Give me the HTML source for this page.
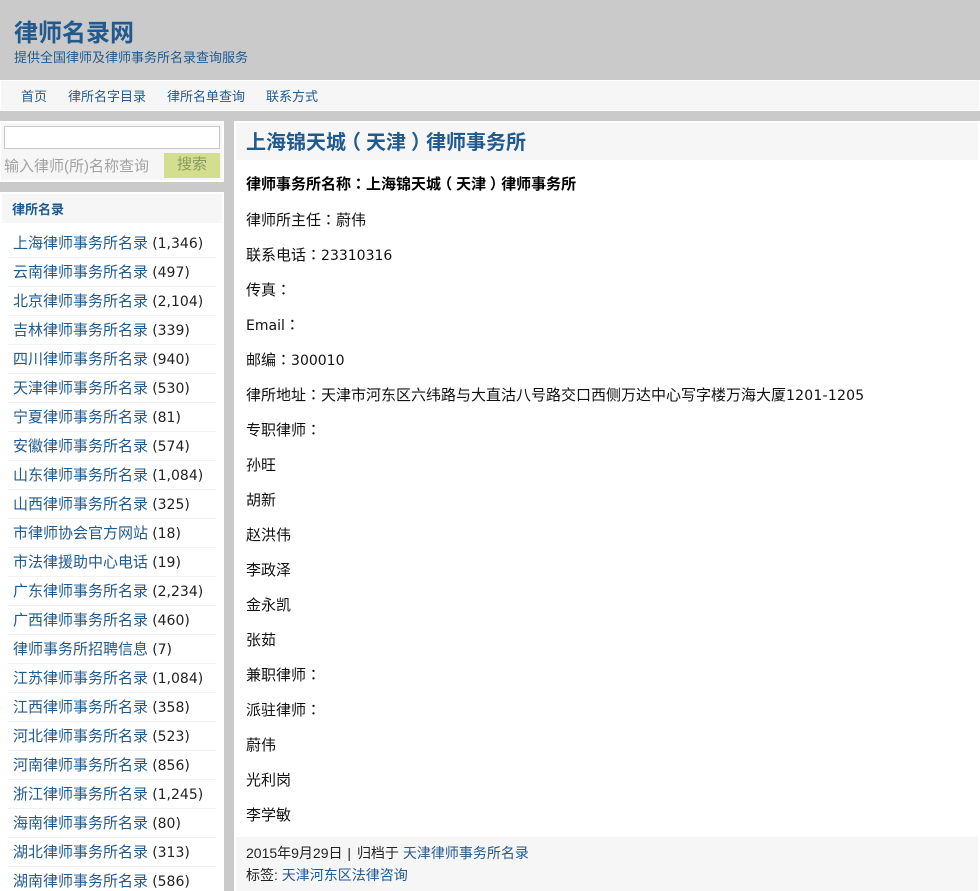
<!DOCTYPE html>
<html><head><meta charset="utf-8"><title>上海锦天城（天津）律师事务所</title>
<style>
html,body{margin:0;padding:0;background:#cacaca;height:891px;overflow:hidden}
body{width:980px;position:relative;font-family:"Liberation Sans","Noto Sans CJK SC",sans-serif;font-size:15px;color:#111}
.a{position:absolute;white-space:nowrap}
a{color:#215a8f;text-decoration:none}
i{font-style:normal;font-family:"Noto Sans CJK TC",sans-serif;line-height:0}
i.l{position:relative;left:-.25em}
i.r{position:relative;left:.25em}
.num{font-family:"DejaVu Sans","Noto Sans CJK SC",sans-serif;font-size:14px;line-height:0}
#nav{left:0;top:80px;width:980px;height:31px;background:#f6f6f6;border:1px solid #fff;box-sizing:border-box}
#nav a{position:absolute;top:7px;font-size:13px;line-height:17px}
#side1{left:0;top:121px;width:224px;height:61px;background:#f6f6f6;border:2px solid #fff;border-left-width:1px;box-sizing:border-box}
#side2{left:0;top:192px;width:224px;height:699px;background:#fff}
#main{left:234px;top:121px;width:746px;height:770px;background:#fff}
.item{position:absolute;left:8px;width:208px;height:28px;border-bottom:1px solid #f2f2f2;line-height:30px;white-space:nowrap;color:#222;text-indent:5px}
.item a{font-size:15px}
.p{position:absolute;left:246px;white-space:nowrap;line-height:20px;font-size:15px;color:#111}
</style></head><body>
<div class="a" style="left:14px;top:17px;font-size:24px;font-weight:bold;color:#215a8f;line-height:34px">律师名录网</div>
<div class="a" style="left:14px;top:50px;font-size:13px;color:#215a8f;line-height:16px">提供全国律师及律师事务所名录查询服务</div>
<div class="a" id="nav">
<a style="left:20px">首页</a><a style="left:67px">律所名字目录</a><a style="left:166px">律所名单查询</a><a style="left:265px">联系方式</a>
</div>
<div class="a" id="side1"></div>
<div class="a" style="left:4px;top:126px;width:216px;height:23px;background:#fff;border:1px solid #c8c8c8;box-sizing:border-box"></div>
<div class="a" style="left:4px;top:157px;font-size:15px;line-height:20px;color:#a3a3a3">输入律师(所)名称查询</div>
<div class="a" style="left:164px;top:153px;width:56px;height:25px;background:#d3df8f;color:#8b9a62;font-size:15px;line-height:24px;text-align:center">搜索</div>
<div class="a" id="side2">
<div style="position:absolute;left:2px;top:2px;width:220px;height:29px;background:#f6f6f6"></div>
<div class="a" style="left:12px;top:9px;font-size:13px;font-weight:bold;color:#215a8f;line-height:18px">律所名录</div>
<div class="item" style="top:37px"><a>上海律师事务所名录</a> <span class="num">(1,346)</span></div>
<div class="item" style="top:66px"><a>云南律师事务所名录</a> <span class="num">(497)</span></div>
<div class="item" style="top:95px"><a>北京律师事务所名录</a> <span class="num">(2,104)</span></div>
<div class="item" style="top:124px"><a>吉林律师事务所名录</a> <span class="num">(339)</span></div>
<div class="item" style="top:153px"><a>四川律师事务所名录</a> <span class="num">(940)</span></div>
<div class="item" style="top:182px"><a>天津律师事务所名录</a> <span class="num">(530)</span></div>
<div class="item" style="top:211px"><a>宁夏律师事务所名录</a> <span class="num">(81)</span></div>
<div class="item" style="top:240px"><a>安徽律师事务所名录</a> <span class="num">(574)</span></div>
<div class="item" style="top:269px"><a>山东律师事务所名录</a> <span class="num">(1,084)</span></div>
<div class="item" style="top:298px"><a>山西律师事务所名录</a> <span class="num">(325)</span></div>
<div class="item" style="top:327px"><a>市律师协会官方网站</a> <span class="num">(18)</span></div>
<div class="item" style="top:356px"><a>市法律援助中心电话</a> <span class="num">(19)</span></div>
<div class="item" style="top:385px"><a>广东律师事务所名录</a> <span class="num">(2,234)</span></div>
<div class="item" style="top:414px"><a>广西律师事务所名录</a> <span class="num">(460)</span></div>
<div class="item" style="top:443px"><a>律师事务所招聘信息</a> <span class="num">(7)</span></div>
<div class="item" style="top:472px"><a>江苏律师事务所名录</a> <span class="num">(1,084)</span></div>
<div class="item" style="top:501px"><a>江西律师事务所名录</a> <span class="num">(358)</span></div>
<div class="item" style="top:530px"><a>河北律师事务所名录</a> <span class="num">(523)</span></div>
<div class="item" style="top:559px"><a>河南律师事务所名录</a> <span class="num">(856)</span></div>
<div class="item" style="top:588px"><a>浙江律师事务所名录</a> <span class="num">(1,245)</span></div>
<div class="item" style="top:617px"><a>海南律师事务所名录</a> <span class="num">(80)</span></div>
<div class="item" style="top:646px"><a>湖北律师事务所名录</a> <span class="num">(313)</span></div>
<div class="item" style="top:675px"><a>湖南律师事务所名录</a> <span class="num">(586)</span></div>
</div>
<div class="a" id="main"></div>
<div class="a" style="left:236px;top:123px;width:742px;height:37px;background:#f6f6f6"></div>
<div class="a" style="left:246px;top:129px;font-size:20px;font-weight:bold;color:#215a8f;line-height:28px">上海锦天城<i class="l" lang="zh-TW">（</i>天津<i class="r" lang="zh-TW">）</i>律师事务所</div>
<div class="p" style="top:175px;font-weight:bold;font-size:15px;color:#000">律师事务所名称<i lang="zh-TW">：</i>上海锦天城<i class="l" lang="zh-TW">（</i>天津<i class="r" lang="zh-TW">）</i>律师事务所</div>
<div class="p" style="top:211px">律师所主任<i lang="zh-TW">：</i>蔚伟</div>
<div class="p" style="top:246px">联系电话<i lang="zh-TW">：</i><span class="num">23310316</span></div>
<div class="p" style="top:281px">传真<i lang="zh-TW">：</i></div>
<div class="p" style="top:316px"><span class="num">Email</span><i lang="zh-TW">：</i></div>
<div class="p" style="top:351px">邮编<i lang="zh-TW">：</i><span class="num">300010</span></div>
<div class="p" style="top:386px">律所地址<i lang="zh-TW">：</i>天津市河东区六纬路与大直沽八号路交口西侧万达中心写字楼万海大厦<span class="num" style="letter-spacing:.22px">1201-1205</span></div>
<div class="p" style="top:421px">专职律师<i lang="zh-TW">：</i></div>
<div class="p" style="top:456px">孙旺</div>
<div class="p" style="top:491px">胡新</div>
<div class="p" style="top:526px">赵洪伟</div>
<div class="p" style="top:561px">李政泽</div>
<div class="p" style="top:596px">金永凯</div>
<div class="p" style="top:631px">张茹</div>
<div class="p" style="top:666px">兼职律师<i lang="zh-TW">：</i></div>
<div class="p" style="top:701px">派驻律师<i lang="zh-TW">：</i></div>
<div class="p" style="top:736px">蔚伟</div>
<div class="p" style="top:771px">光利岗</div>
<div class="p" style="top:806px">李学敏</div>
<div class="a" style="left:236px;top:837px;width:742px;height:54px;background:#f6f6f6"></div>
<div class="a" style="left:246px;top:844px;font-size:14px;line-height:18px;color:#222">2015年9月29日<span style="margin:0 2px 0 1px"> | </span>归档于 <a>天津律师事务所名录</a></div>
<div class="a" style="left:246px;top:866px;font-size:14px;line-height:18px;color:#222">标签: <a>天津河东区法律咨询</a></div>
</body></html>
